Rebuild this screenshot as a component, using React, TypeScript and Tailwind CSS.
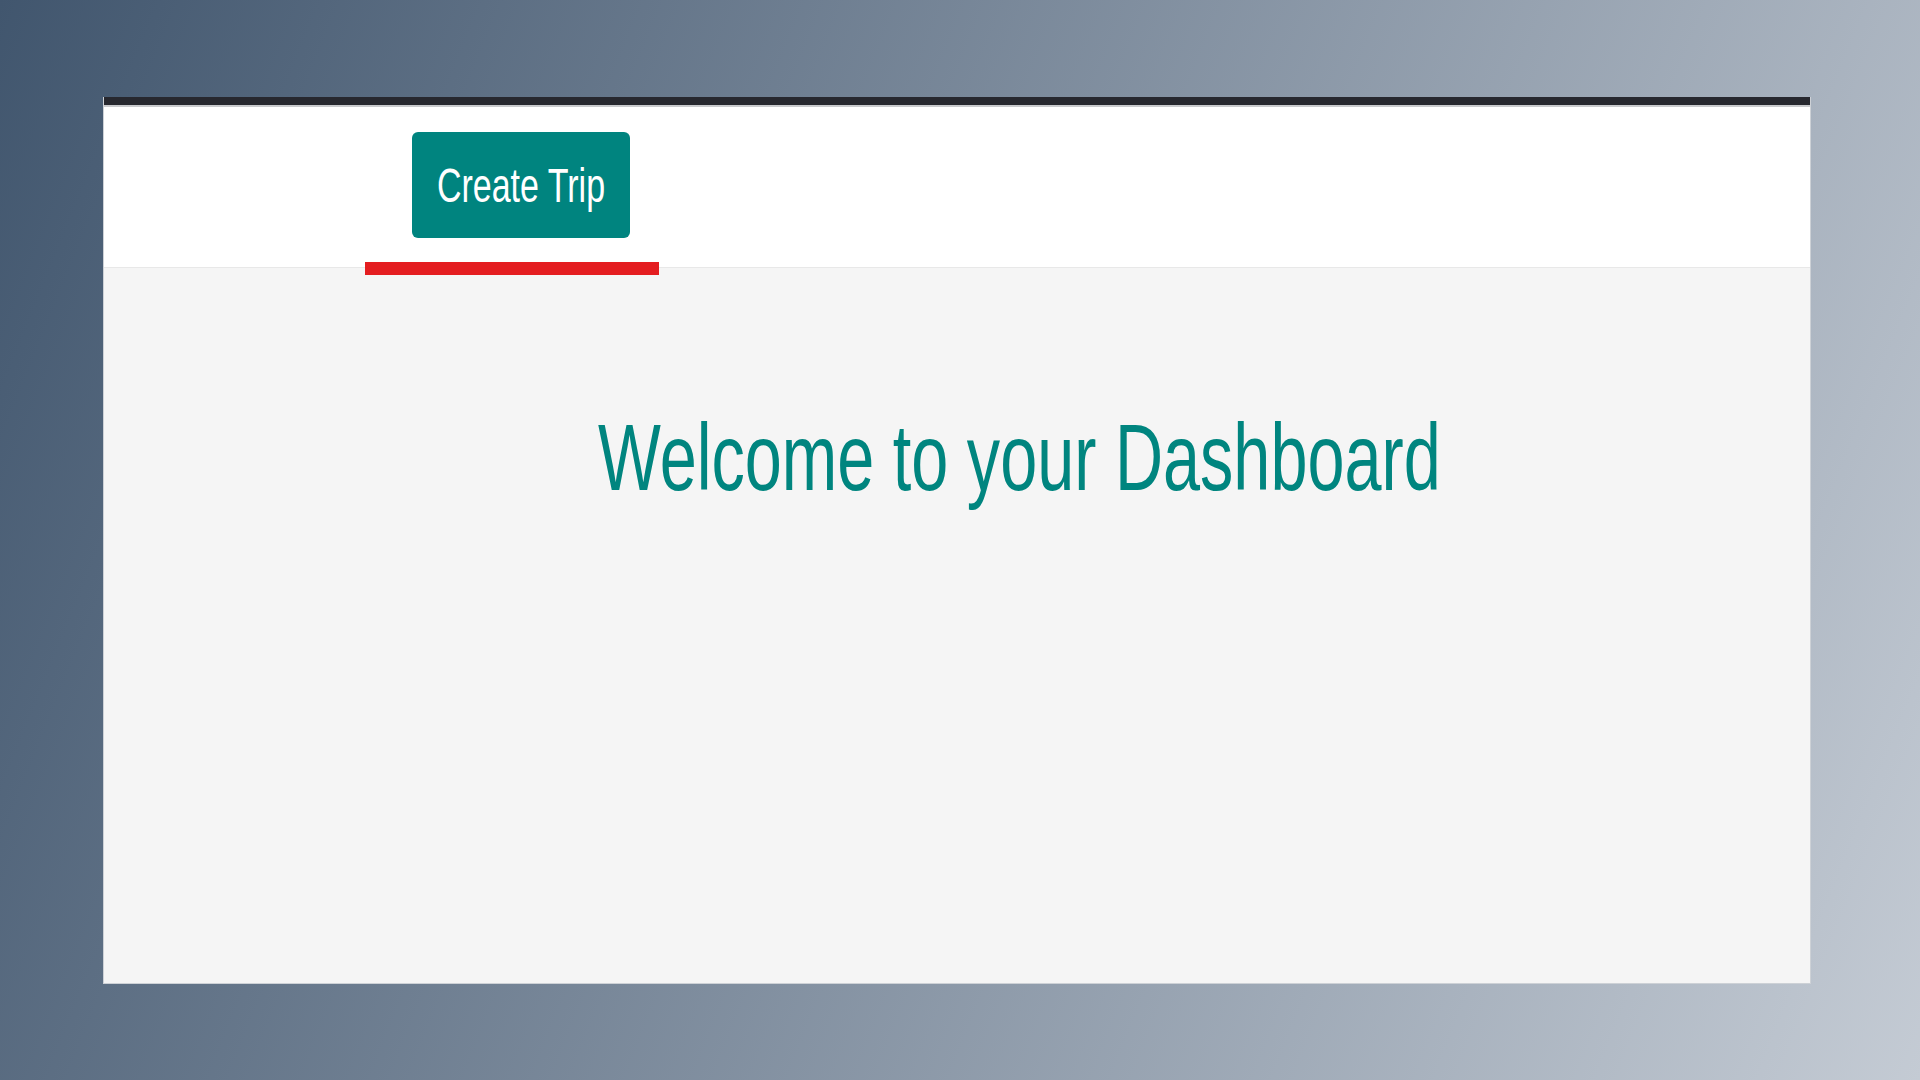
export default function App() {
  return (
    <div className="h-screen w-full bg-[linear-gradient(112deg,#41566e,#c4cbd4)] pt-[97px] pl-[103px] pr-[109px] pb-[96px] font-['Liberation_Sans',Arial,sans-serif]">
      <div className="flex h-full flex-col border-x border-b border-[#cdd1d6] bg-[#f5f5f5]">
        {/* window top bar */}
        <div className="h-[8px] bg-[#27282f]" />
        <div className="h-[2px] bg-[#c9cacd]" />

        {/* Header */}
        <header className="relative z-10 h-[161px] border-b border-[#e8e8e8] bg-white pl-[261px]">
          <div className="flex w-[294px] flex-col items-start pt-[25px]">
            <button className="ml-[47px] flex h-[106px] w-[218px] items-center justify-center rounded-[6px] bg-[#00847f] text-white">
              <span className="inline-block scale-y-[1.43] text-[34px] leading-[34px]">Create Trip</span>
            </button>
            <div className="mt-[24px] h-[13px] w-full bg-[#e41d20]" />
          </div>
        </header>

        {/* Content */}
        <main className="flex-1 pt-[156px] pl-[494px]">
          <h1 className="inline-block scale-y-[1.43] text-[66.6px] leading-[67px] font-normal whitespace-nowrap text-[#00857f]">
            Welcome to your Dashboard
          </h1>
        </main>
      </div>
    </div>
  );
}
